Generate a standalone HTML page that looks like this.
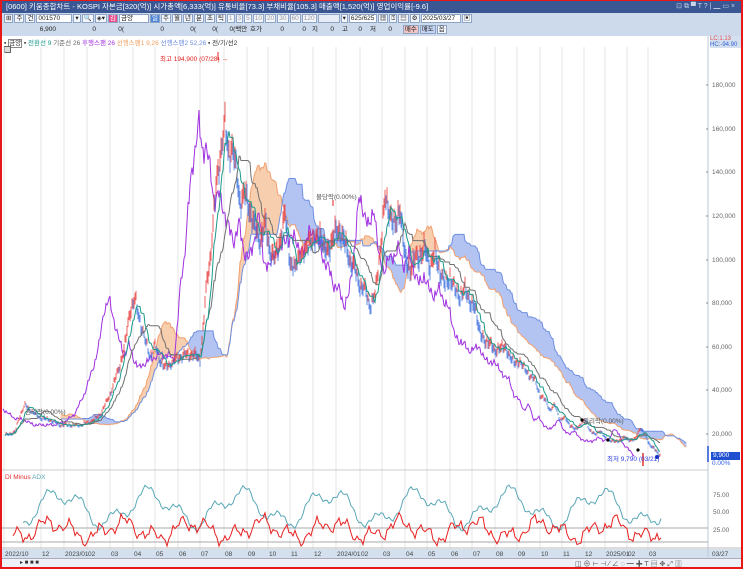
<!DOCTYPE html>
<html><head><meta charset="utf-8">
<style>
*{margin:0;padding:0;box-sizing:border-box}
body{width:743px;height:569px;overflow:hidden;background:#fff;font-family:"Liberation Sans","Noto Sans CJK KR",sans-serif;font-size:7px;position:relative}
.frame{position:absolute;left:0;top:0;width:743px;height:569px;border:2px solid #e81818;border-top-width:1px}
.title{position:absolute;left:2px;top:1px;width:739px;height:12px;background:#3a5793;color:#fff;font-size:7.5px;line-height:12px;padding-left:4px;white-space:nowrap}
.tb{position:absolute;left:2px;width:739px;background:#cddaec}
.row{position:absolute;font-size:6.5px;white-space:nowrap;color:#222}
.btn{display:inline-block;border:1px solid #8ea4c4;background:#f3f6fb;height:9px;line-height:8px;padding:0 1px;margin-right:1px;vertical-align:top;font-size:6.5px}
svg{position:absolute;left:0;top:0}
</style></head><body>
<div class="title">[0600] 키움종합차트 - KOSPI 자본금[320(억)] 시가총액[6,333(억)] 유통비율[73.3] 부채비율[105.3] 매출액[1,520(억)] 영업이익률[-9.6]
<span style="position:absolute;right:6px;top:0;font-size:7px;color:#c8d4ea">⊡ ⧉ ▀ T ? | ▁ ▭ ×</span></div>
<div class="tb" style="top:13px;height:23px"></div>
<div class="tb" style="top:549px;height:9px;background:#d4e0ee"></div>
<div class="tb" style="top:558px;height:9px;background:#eef2f8;border-top:1px solid #aab"></div>
<div class="row" style="left:4px;top:14px">
<span class="btn">⊞</span><span class="btn">주</span><span class="btn">건</span><span class="btn" style="background:#fff;width:36px">001570</span><span class="btn">▾</span><span class="btn">🔍</span><span class="btn">◈▾</span><span class="btn" style="background:#e94a8a;color:#fff">김</span><span class="btn" style="background:#fff;width:30px">금양</span><span class="btn" style="background:#4d86d6;color:#fff">일</span><span class="btn">주</span><span class="btn">월</span><span class="btn">년</span><span class="btn">분</span><span class="btn">초</span><span class="btn">틱</span><span class="btn" style="color:#999">1</span><span class="btn" style="color:#999">3</span><span class="btn" style="color:#999">5</span><span class="btn" style="color:#999">10</span><span class="btn" style="color:#999">20</span><span class="btn" style="color:#999">30</span><span class="btn" style="color:#999">60</span><span class="btn" style="color:#999">120</span><span class="btn" style="width:22px;background:#e8edf5"></span><span class="btn">▾</span><span class="btn" style="background:#fff;width:28px">625/625</span><span class="btn">▦</span><span class="btn">⍰</span><span class="btn">▤</span><span class="btn">⚙</span><span class="btn" style="background:#fff;width:40px">2025/03/27</span><span class="btn">▣</span></div>
<div class="row" style="left:4px;top:25px;line-height:10px;word-spacing:1px">
<span style="display:inline-block;width:52px;text-align:right">6,900</span><span style="display:inline-block;width:40px;text-align:right">0</span><span style="display:inline-block;width:28px;text-align:right">0(</span><span style="display:inline-block;width:40px;text-align:right">0</span><span style="display:inline-block;width:32px;text-align:right">0(</span><span style="display:inline-block;width:22px;text-align:right">0(</span><span style="display:inline-block;width:44px;text-align:right">0(백만 호가</span><span style="display:inline-block;width:22px;text-align:right">0</span><span style="display:inline-block;width:22px;text-align:right">0</span><span style="display:inline-block;width:12px;text-align:right">지</span><span style="display:inline-block;width:16px;text-align:right">0</span><span style="display:inline-block;width:14px;text-align:right">고</span><span style="display:inline-block;width:14px;text-align:right">0</span><span style="display:inline-block;width:14px;text-align:right">저</span><span style="display:inline-block;width:16px;text-align:right">0</span>
<span class="btn" style="background:#f2c4c4;margin-left:8px">매수</span><span class="btn" style="background:#c4d4f2">매도</span><span class="btn">옵</span></div>
<div class="row" style="left:4px;top:37px;color:#333">▪ <span style="border:1px solid #888">금양</span> ▪ <span style="color:#1a9a8a">전환선 9</span> <span style="color:#666">기준선 26</span> <span style="color:#a030e0">후행스팬 26</span> <span style="color:#f0a060">선행스팬1 9,26</span> <span style="color:#6f8fe0">선행스팬2 52,26</span> ▪ 전/기/선2</div>
<div style="position:absolute;left:4px;top:46px;width:7px;height:7px;border:1px solid #666;background:#ddd"></div>
<div style="position:absolute;left:710px;top:36px;width:31px;height:12px;background:#d4e0f0;font-size:6px;line-height:6px"><span style="color:#e05050">LC:1.13</span><br><span style="color:#3060d0">HC:-94.90</span></div>
<svg id="s" width="743" height="569"></svg>
<div class="row" style="left:160px;top:53px;color:#e02020">최고 194,900 (07/28) →</div>
<div class="row" style="left:316px;top:191px;color:#555">물당락(0.00%)</div>
<div class="row" style="left:25px;top:406px;color:#555">권리락(0.00%)</div>
<div class="row" style="left:583px;top:415px;color:#555">권리락(0.00%)</div>
<div class="row" style="left:607px;top:453px;color:#3040e0">최저 9,790 (03/21)</div>
<div class="row" style="left:5px;top:474px;color:#e03030">DI Minus <span style="color:#5aa8b8">ADX</span></div>
<div style="position:absolute;left:711px;top:452px;width:29px;height:8px;background:#2050d0;color:#fff;font-size:6.5px;line-height:8px;padding-left:2px">9,900</div>
<div class="row" style="left:712px;top:460px;color:#3060e0">0.00%</div>
<div class="row" style="left:575px;top:559px;font-size:7px;color:#555">◫ ⊕ ⊢ ⊣ ⁄ ∠ ◌ ━ ✚ T ▤ ✥ ⤢ ▥</div>
<div class="row" style="left:20px;top:559px;font-size:6px;color:#333">▸ ■ ■ ■</div>
<script>
var s=document.getElementById('s'),out='';
function L(x1,y1,x2,y2,c,w){out+='<line x1="'+x1+'" y1="'+y1+'" x2="'+x2+'" y2="'+y2+'" stroke="'+c+'" stroke-width="'+(w||1)+'"/>';}
function P(pts,c,w){out+='<polyline fill="none" stroke="'+c+'" stroke-width="'+(w||1)+'" points="'+pts.map(function(p){return p[0]+','+p[1].toFixed(1)}).join(' ')+'"/>';}
function T(x,y,t,c,a){out+='<text x="'+x+'" y="'+y+'" font-size="6.5" fill="'+(c||'#555')+'" font-family="Liberation Sans,sans-serif"'+(a?' text-anchor="'+a+'"':'')+'>'+t+'</text>';}
var months=[[4,'2022/10'],[41,'12'],[64,'2023/01'],[87,'02'],[110,'03'],[133,'04'],[155,'05'],[178,'06'],[200,'07'],[224,'08'],[247,'09'],[268,'10'],[290,'11'],[313,'12'],[336,'2024/01'],[360,'02'],[382,'03'],[405,'04'],[427,'05'],[450,'06'],[472,'07'],[495,'08'],[517,'09'],[540,'10'],[562,'11'],[584,'12'],[605,'2025/01'],[627,'02'],[648,'03']];
months.forEach(function(m){L(m[0],47,m[0],549,'#e4e4e4');T(m[0]+1,556,m[1],'#444');});
L(708,36,708,557,'#bcc8d8');L(2,470,708,470,'#ccc');L(2,548,741,548,'#bbb');
T(712,556,'03/27','#444');
[[180,85],[160,129],[140,172],[120,216],[100,260],[80,303],[60,347],[40,390],[20,434]].forEach(function(v){T(712,v[1]+2,(v[0])+',000','#666');L(706,v[1],708,v[1],'#888');});
L(2,528,708,528,'#aaa');L(2,542,708,542,'#aaa');
[[75,495],[50,512],[25,530]].forEach(function(v){T(713,v[1]+2,v[0]+'.00','#666');});
var K=[[5,435],[15,432],[20,415],[25,405],[30,410],[40,418],[50,420],[60,425],[80,425],[90,422],[100,415],[105,405],[110,395],[115,380],[120,365],[125,345],[130,310],[135,300],[140,320],[145,340],[150,355],[155,345],[160,360],[165,368],[175,360],[185,355],[195,355],[200,360],[203,330],[207,280],[210,260],[215,200],[218,170],[222,140],[225,125],[228,150],[232,145],[236,170],[240,200],[245,195],[250,210],[255,230],[260,240],[265,225],[270,250],[275,260],[280,240],[285,215],[290,260],[295,270],[300,250],[305,255],[310,235],[315,245],[320,230],[325,255],[330,245],[335,235],[340,230],[345,245],[350,260],[355,270],[360,285],[365,290],[370,305],[375,295],[380,250],[385,200],[390,210],[395,230],[400,205],[405,260],[410,270],[415,260],[425,250],[430,265],[435,255],[440,270],[445,285],[450,275],[455,290],[460,295],[465,290],[470,300],[475,310],[480,330],[485,345],[490,340],[495,355],[500,345],[505,350],[510,355],[515,365],[520,360],[525,370],[530,375],[535,380],[540,395],[545,400],[550,410],[555,405],[560,420],[565,418],[570,425],[575,430],[580,425],[585,420],[590,430],[595,435],[600,430],[605,438],[610,440],[615,442],[620,440],[625,438],[630,440],[635,440],[640,428],[645,435],[650,445],[655,450],[660,455]];
function interp(x){for(var i=0;i<K.length-1;i++){if(x>=K[i][0]&&x<=K[i+1][0]){var t=(x-K[i][0])/(K[i+1][0]-K[i][0]);return K[i][1]+t*(K[i+1][1]-K[i][1]);}}return K[K.length-1][1];}
var X0=5,X1=660,C=[],H=[],Lo=[];
for(var x=X0;x<=X1;x++){var b=interp(x);var amp=Math.max(1.5,(450-b)*0.04);var c=b+amp*(Math.sin(x*1.7)*0.6+Math.sin(x*0.63+1)*0.5+Math.sin(x*2.9)*0.3);C.push(c);H.push(c-amp*(0.6+0.5*Math.abs(Math.sin(x*3.1))));Lo.push(c+amp*(0.6+0.5*Math.abs(Math.cos(x*2.3))));}
function mid(i,n){var hi=1e9,lo=-1e9;for(var j=Math.max(0,i-n+1);j<=i;j++){hi=Math.min(hi,H[j]);lo=Math.max(lo,Lo[j]);}return (hi+lo)/2;}
var ten=[],kij=[],sB=[];for(var i=0;i<C.length;i++){ten.push(mid(i,9));kij.push(mid(i,26));sB.push(mid(i,52));}
var A=[],B=[];for(var i=0;i<C.length;i++){var xx=X0+i+26;if(i<30)continue;A.push([xx,(ten[i]+kij[i])/2]);B.push([xx,sB[i]]);}
for(var i=0;i<A.length;i++){var a=A[i][1],b2=B[i][1];L(A[i][0],a,A[i][0],b2,a>b2?'#b3c4f2':'#f8cfae');}
P(A,'#f0a070');P(B,'#6f8fe0');
var lag=[];for(var i=0;i<C.length;i++)lag.push([X0+i-26,C[i]]);P(lag.filter(function(p){return p[0]>=3}),'#a030e0');
for(var i=1;i<C.length;i++){var x=X0+i,o=C[i-1],c=C[i],col=c<o?'#e83a3a':'#3a6ee0';L(x,H[i],x,Lo[i],col,0.8);}
var tp=[],kp=[];for(var i=0;i<C.length;i++){tp.push([X0+i,ten[i]]);kp.push([X0+i,kij[i]]);}
P(kp,'#707070');P(tp,'#1a9a8a');
L(218,52,218,60,'#e02020');L(333,200,333,206,'#e02020');
[[608,440],[638,450],[582,420]].forEach(function(p){out+='<circle cx="'+p[0]+'" cy="'+p[1]+'" r="1.6" fill="#000"/>';});
out+='<circle cx="657" cy="457" r="2" fill="#1030c0"/>';
L(643,453,643,466,'#e03030',1.5);L(708,446,708,462,'#2050d0',1.5);
var r=[],t=[];for(var x=13;x<=662;x+=2){var v=530+7*Math.sin(x*0.09)+6*Math.sin(x*0.23+1)+4*Math.sin(x*0.61)+2*Math.sin(x*1.7);r.push([x,Math.max(505,Math.min(546,v))]);}
for(var x=23;x<=662;x+=2){var v=508+14*Math.sin(x*0.07+0.5)+8*Math.sin(x*0.19+2)+2*Math.sin(x*0.9);t.push([x,Math.max(480,Math.min(538,v))]);}
P(t,'#5aa8b8');P(r,'#e82020');
s.innerHTML=out;
</script>
<div class="frame"></div>
</body></html>
